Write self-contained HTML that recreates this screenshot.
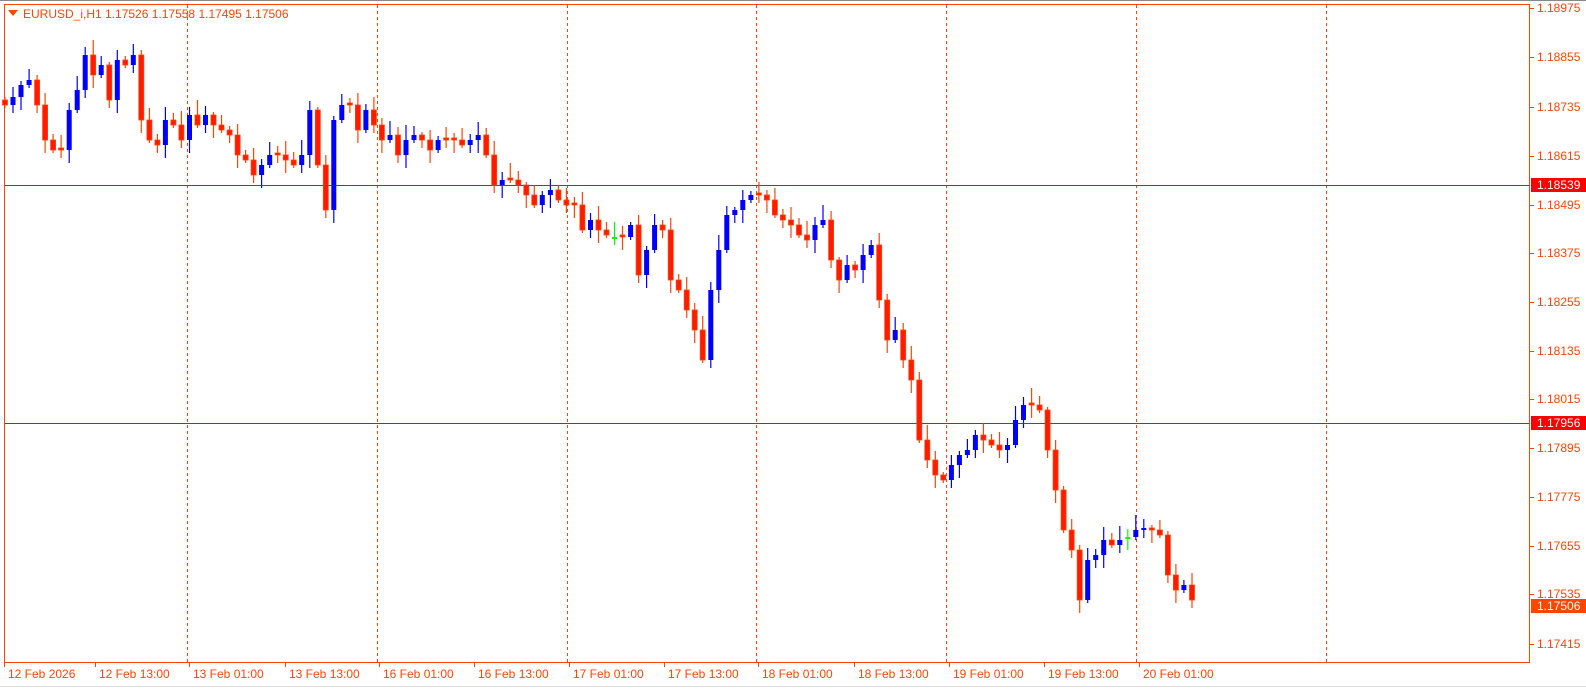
<!DOCTYPE html>
<html><head><meta charset="utf-8"><style>
html,body{margin:0;padding:0;background:#fff;width:1586px;height:696px;overflow:hidden}
svg{display:block}
text{font-family:"Liberation Sans",sans-serif;font-size:12px;fill:#FF4500}
</style></head><body>
<svg id="s" width="1586" height="696" xmlns="http://www.w3.org/2000/svg">
<rect x="0" y="0" width="1586" height="696" fill="#fff"/>
<line x1="0" y1="0.5" x2="1586" y2="0.5" stroke="#888"/>
<line x1="0" y1="686.5" x2="1586" y2="686.5" stroke="#ddd"/>
<rect x="4.5" y="4.5" width="1525" height="658" fill="none" stroke="#FF4500"/>
<g id="grid" stroke="#FF4500" stroke-dasharray="3,3" stroke-width="1"></g>
<line x1="5" y1="185.5" x2="1529" y2="185.5" stroke="#FF0000"/>
<line x1="5" y1="423.5" x2="1529" y2="423.5" stroke="#FF0000"/>
<g id="c"></g>
<polygon points="8,10 18,10 13,16" fill="#FF4500"/>
<text x="23" y="18">EURUSD_i,H1  1.17526 1.17558 1.17495 1.17506</text>
<g id="ax"></g>
</svg>
<script>
(function(){
var NS="http://www.w3.org/2000/svg";
function el(p,t,a,txt){var e=document.createElementNS(NS,t);for(var k in a)e.setAttribute(k,a[k]);if(txt)e.textContent=txt;p.appendChild(e);return e;}
var g=document.getElementById('grid');
[187,377,567,756,946,1136,1326].forEach(function(x){el(g,'line',{x1:x+.5,y1:5,x2:x+.5,y2:662});});
var ax=document.getElementById('ax');
var py=[["1.18975",8],["1.18855",57],["1.18735",107],["1.18615",156],["1.18495",205],["1.18375",253],["1.18255",302],["1.18135",351],["1.18015",399],["1.17895",448],["1.17775",497],["1.17655",546],["1.17535",594],["1.17415",644]];
py.forEach(function(p){el(ax,'line',{x1:1530,y1:p[1]+.5,x2:1534,y2:p[1]+.5,stroke:"#FF4500"});el(ax,'text',{x:1537,y:p[1]+4},p[0]);});
[["1.18539",185,"#FF0000"],["1.17956",423,"#FF0000"],["1.17506",606,"#FF4500"]].forEach(function(p){el(ax,'rect',{x:1531,y:p[1]-7,width:55,height:14,fill:p[2]});el(ax,'text',{x:1537,y:p[1]+4,style:"fill:#fff"},p[0]);});
var tl=[["12 Feb 2026",8],["12 Feb 13:00",99],["13 Feb 01:00",193],["13 Feb 13:00",289],["16 Feb 01:00",383],["16 Feb 13:00",478],["17 Feb 01:00",573],["17 Feb 13:00",668],["18 Feb 01:00",762],["18 Feb 13:00",858],["19 Feb 01:00",953],["19 Feb 13:00",1048],["20 Feb 01:00",1143]];
tl.forEach(function(t){el(ax,'line',{x1:t[1]-3.5,y1:663,x2:t[1]-3.5,y2:667,stroke:"#FF4500"});el(ax,'text',{x:t[1],y:678},t[0]);});
var cl=[105,97,85,80,105,140,150,150,110,90,55,75,65,100,60,65,55,120,140,145,120,125,140,115,125,115,125,130,135,155,160,175,165,155,155,160,165,155,110,165,210,120,105,105,130,110,125,140,135,155,140,135,140,150,140,140,140,145,140,135,155,185,180,180,185,195,205,195,190,200,205,205,230,220,230,235,237,237,225,275,250,225,230,280,290,310,330,360,290,250,215,210,200,195,195,200,215,220,225,235,240,225,220,260,280,265,270,255,245,300,340,330,360,380,440,460,475,480,465,455,450,435,440,445,450,445,420,405,405,410,450,490,530,550,600,560,555,540,545,540,537,530,528,530,535,575,590,585,600];
var c=document.getElementById('c');var prev=100;
for(var i=0;i<cl.length;i++){
 var x=5+8.02*i, o=prev, cc=cl[i];
 var green=(i==76||i==140);
 if(green){o=cc;} else if(o==cc){o=cc-2;}
 var bt=Math.min(o,cc),bb=Math.max(o,cc);
 var hi=bt-(3+(i*7)%13), lo=bb+(3+(i*5)%15);
 var col,fill;
 if(green){col="#00FF00";fill="#00FF00";}
 else if(cc>o){col="#FF4500";fill="#FF1A00";}else{col="#0000FF";fill="#0000FF";}
 el(c,'line',{x1:x.toFixed(1),y1:hi,x2:x.toFixed(1),y2:lo,stroke:col,"stroke-width":1.2});
 var h=Math.max(bb-bt,2);
 el(c,'rect',{x:(x-2.5).toFixed(1),y:bt,width:5,height:h,fill:fill,stroke:col,"stroke-width":(cc>o?0.8:0)});
 prev=cc;
}
})();
</script>
</body></html>
